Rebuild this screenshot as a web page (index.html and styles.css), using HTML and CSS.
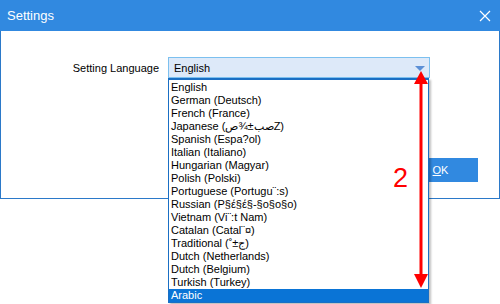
FILE: index.html
```html
<!DOCTYPE html>
<html>
<head>
    <meta charset="UTF-8">
    <title>Settings</title>
    <link rel="stylesheet" href="styles.css">
</head>
<body>
    <div class="win">
        <div class="titlebar">
            <span class="title">Settings</span>
            <svg class="close" width="12" height="12" viewBox="0 0 12 12"><path d="M1 1 L11 11 M11 1 L1 11" stroke="#fff" stroke-width="1.2"/></svg>
        </div>
        <div class="content">
            <div class="row">
                <label class="label">Setting Language</label>
                <div class="combo">
                    <span>English</span>
                    <span class="caret"></span>
                </div>
            </div>
            <div class="footer">
                <button class="ok"><u>O</u>K</button>
            </div>
        </div>
    </div>

    <!-- open dropdown list -->
    <ul class="list">
        <li>English</li>
        <li>German (Deutsch)</li>
        <li>French (France)</li>
        <li>Japanese (&#x202D;ص¾±بصZ&#x202C;)</li>
        <li>Spanish (Espa?ol)</li>
        <li>Italian (Italiano)</li>
        <li>Hungarian (Magyar)</li>
        <li>Polish (Polski)</li>
        <li>Portuguese (Portugu¨:s)</li>
        <li>Russian (P§έ§έ§-§ο§ο§ο)</li>
        <li>Vietnam (Vi¨:t Nam)</li>
        <li>Catalan (Catal¨¤)</li>
        <li>Traditional (&#x202D;˚±ج&#x202C;)</li>
        <li>Dutch (Netherlands)</li>
        <li>Dutch (Belgium)</li>
        <li>Turkish (Turkey)</li>
        <li class="sel">Arabic</li>
    </ul>

    <!-- annotation -->
    <div class="note">2</div>
    <svg class="arrow" width="16" height="218" viewBox="0 0 16 218">
        <polygon points="8,0 15,13 1,13" fill="#ff0000"/>
        <rect x="6.5" y="12" width="3" height="194" fill="#ff0000"/>
        <polygon points="8,217 15,203 1,203" fill="#ff0000"/>
    </svg>
</body>
</html>
```

FILE: styles.css
```css
body {
    margin: 0;
    width: 500px;
    height: 304px;
    background: #fff;
    font-family: "Liberation Sans", Arial, sans-serif;
    font-size: 11px;
    color: #000;
    position: relative;
    overflow: hidden;
}

.win {
    width: 500px;
    height: 199px;
    box-sizing: border-box;
    border: 1px solid #2b79c9;
    border-top: none;
    display: flex;
    flex-direction: column;
}

.titlebar {
    height: 31px;
    background: #3189e0;
    display: flex;
    align-items: center;
    justify-content: space-between;
    padding: 0 9px 0 7px;
    margin: 0 -1px;
}

.title {
    color: #fff;
    font-size: 13px;
}

.content {
    flex: 1;
    display: flex;
    flex-direction: column;
    padding-top: 26px;
}

.row {
    display: flex;
    align-items: center;
}

.label {
    width: 158px;
    text-align: right;
    font-size: 11px;
}

.combo {
    margin-left: 9px;
    width: 262px;
    height: 21px;
    box-sizing: border-box;
    background: #dde9f9;
    border: 1px solid #7cc0ef;
    display: flex;
    align-items: center;
    justify-content: space-between;
    padding: 0 4px 0 5px;
}

.caret {
    width: 0;
    height: 0;
    border-left: 5px solid transparent;
    border-right: 5px solid transparent;
    border-top: 5px solid #5b8fd6;
    margin-top: 1px;
}

.footer {
    display: flex;
    justify-content: flex-end;
    padding: 80px 21px 0 0;
}

.ok {
    width: 75px;
    height: 24px;
    border: none;
    background: #3189e0;
    color: #fff;
    font-family: "Liberation Sans", Arial, sans-serif;
    font-size: 11px;
    padding: 0;
}

.list {
    position: absolute;
    left: 168px;
    top: 78px;
    width: 261px;
    margin: 0;
    padding: 1px 0 0;
    list-style: none;
    box-sizing: border-box;
    background: #fff;
    border: 1px solid #1a6fc4;
    border-top: 2px solid #1a6fc4;
    box-shadow: 2px 2px 2px rgba(0, 0, 0, 0.25);
}

.list li {
    height: 13px;
    line-height: 13px;
    padding-left: 2px;
    white-space: nowrap;
}

.list li.sel {
    background: #0a74d6;
    color: #fff;
}

.note {
    position: absolute;
    left: 393px;
    top: 163px;
    color: #ff0000;
    font-size: 27px;
    font-family: "Liberation Sans", Arial, sans-serif;
}

.arrow {
    position: absolute;
    left: 413px;
    top: 71px;
}
```
